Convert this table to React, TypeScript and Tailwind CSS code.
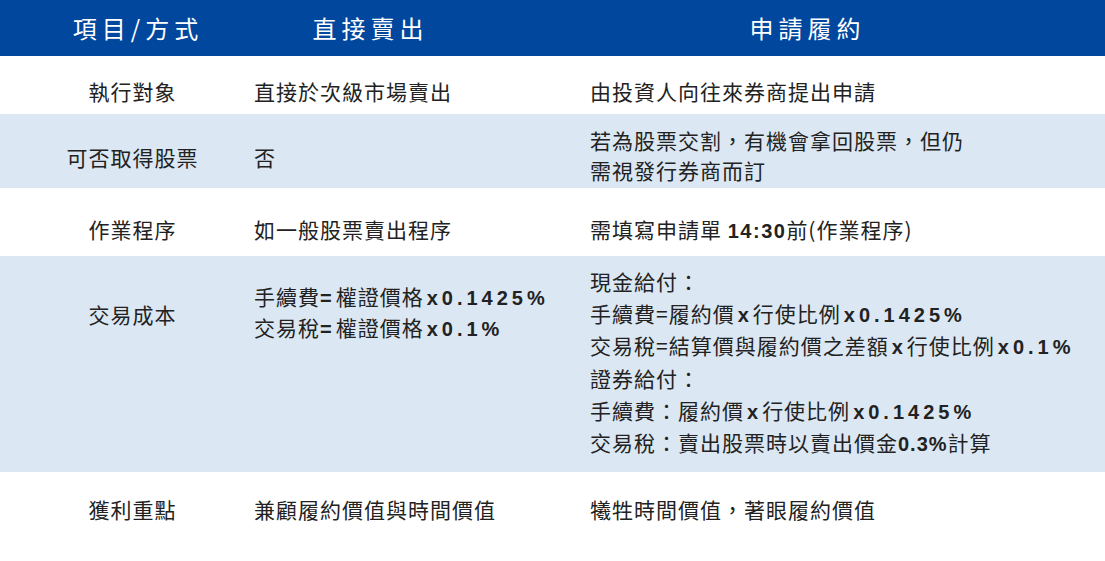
import React from "react";

const cjk = { fontFamily: '"Noto Sans CJK TC", "Noto Sans CJK SC", sans-serif' };
const lat = { fontFamily: '"Liberation Sans", Arial, sans-serif' };

function N({ children }: { children: React.ReactNode }) {
  return (
    <span className="font-bold tracking-[4px] text-[20px] leading-none" style={lat}>
      {children}
    </span>
  );
}

function X() {
  return (
    <span className="font-bold text-[20px] px-[3px] leading-none" style={lat}>
      x
    </span>
  );
}

export default function App() {
  return (
    <div className="w-[1105px] h-[561px] bg-white overflow-hidden text-[#222222]" style={cjk}>
      {/* header */}
      <div className="grid grid-cols-[240px_256px_1fr] h-[56px] bg-[#00479d] text-white text-[24px] font-normal tracking-[5px]">
        <div className="flex items-center justify-center pl-[36px]">項目/方式</div>
        <div className="flex items-center justify-center pl-[5px]">直接賣出</div>
        <div className="flex items-center justify-center pl-[14px]">申請履約</div>
      </div>

      <div className="text-[21px] tracking-[1px] leading-[31px] whitespace-nowrap">
        {/* row 1 */}
        <div className="grid grid-cols-[240px_256px_1fr] h-[58px] bg-white">
          <div className="pt-[20px] pl-[25px] text-center">執行對象</div>
          <div className="pt-[20px] pl-[14px]">直接於次級市場賣出</div>
          <div className="pt-[20px] pl-[94px]">由投資人向往來券商提出申請</div>
        </div>

        {/* row 2 */}
        <div className="grid grid-cols-[240px_256px_1fr] h-[74px] bg-[#dbe7f2] leading-[30px]">
          <div className="pt-[28px] pl-[25px] text-center">可否取得股票</div>
          <div className="pt-[28px] pl-[14px]">否</div>
          <div className="pt-[11px] pl-[94px]">
            <div>若為股票交割，有機會拿回股票，但仍</div>
            <div>需視發行券商而訂</div>
          </div>
        </div>

        {/* row 3 */}
        <div className="grid grid-cols-[240px_256px_1fr] h-[68px] bg-white">
          <div className="pt-[26px] pl-[25px] text-center">作業程序</div>
          <div className="pt-[26px] pl-[14px]">如一般股票賣出程序</div>
          <div className="pt-[26px] pl-[94px]">
            需填寫申請單{" "}
            <span className="font-bold tracking-[1.5px] text-[20px] leading-none" style={lat}>
              14:30
            </span>
            前(作業程序)
          </div>
        </div>

        {/* row 4 */}
        <div className="grid grid-cols-[240px_256px_1fr] h-[216px] bg-[#dbe7f2]">
          <div className="pt-[43px] pl-[25px] text-center">交易成本</div>
          <div className="pt-[25px] pl-[14px]">
            <div className="h-[31px]">
              手續費<N>=</N>權證價格<X />
              <N>0.1425%</N>
            </div>
            <div className="h-[31px]">
              交易稅<N>=</N>權證價格<X />
              <N>0.1%</N>
            </div>
          </div>
          <div className="pt-[9px] pl-[94px] leading-[32px]">
            <div className="h-[32.2px]">現金給付：</div>
            <div className="h-[32.2px]">
              手續費=履約價<X />行使比例<X />
              <N>0.1425%</N>
            </div>
            <div className="h-[32.2px]">
              交易稅=結算價與履約價之差額<X />行使比例<X />
              <N>0.1%</N>
            </div>
            <div className="h-[32.2px]">證券給付：</div>
            <div className="h-[32.2px]">
              手續費：履約價<X />行使比例<X />
              <N>0.1425%</N>
            </div>
            <div className="h-[32.2px]">
              交易稅：賣出股票時以賣出價金
              <span className="font-bold text-[20px] tracking-[1px] leading-none" style={lat}>
                0.3%
              </span>
              計算
            </div>
          </div>
        </div>

        {/* row 5 */}
        <div className="grid grid-cols-[240px_256px_1fr] h-[89px] bg-white">
          <div className="pt-[22px] pl-[25px] text-center">獲利重點</div>
          <div className="pt-[22px] pl-[14px]">兼顧履約價值與時間價值</div>
          <div className="pt-[22px] pl-[94px]">犧牲時間價值，著眼履約價值</div>
        </div>
      </div>
    </div>
  );
}
